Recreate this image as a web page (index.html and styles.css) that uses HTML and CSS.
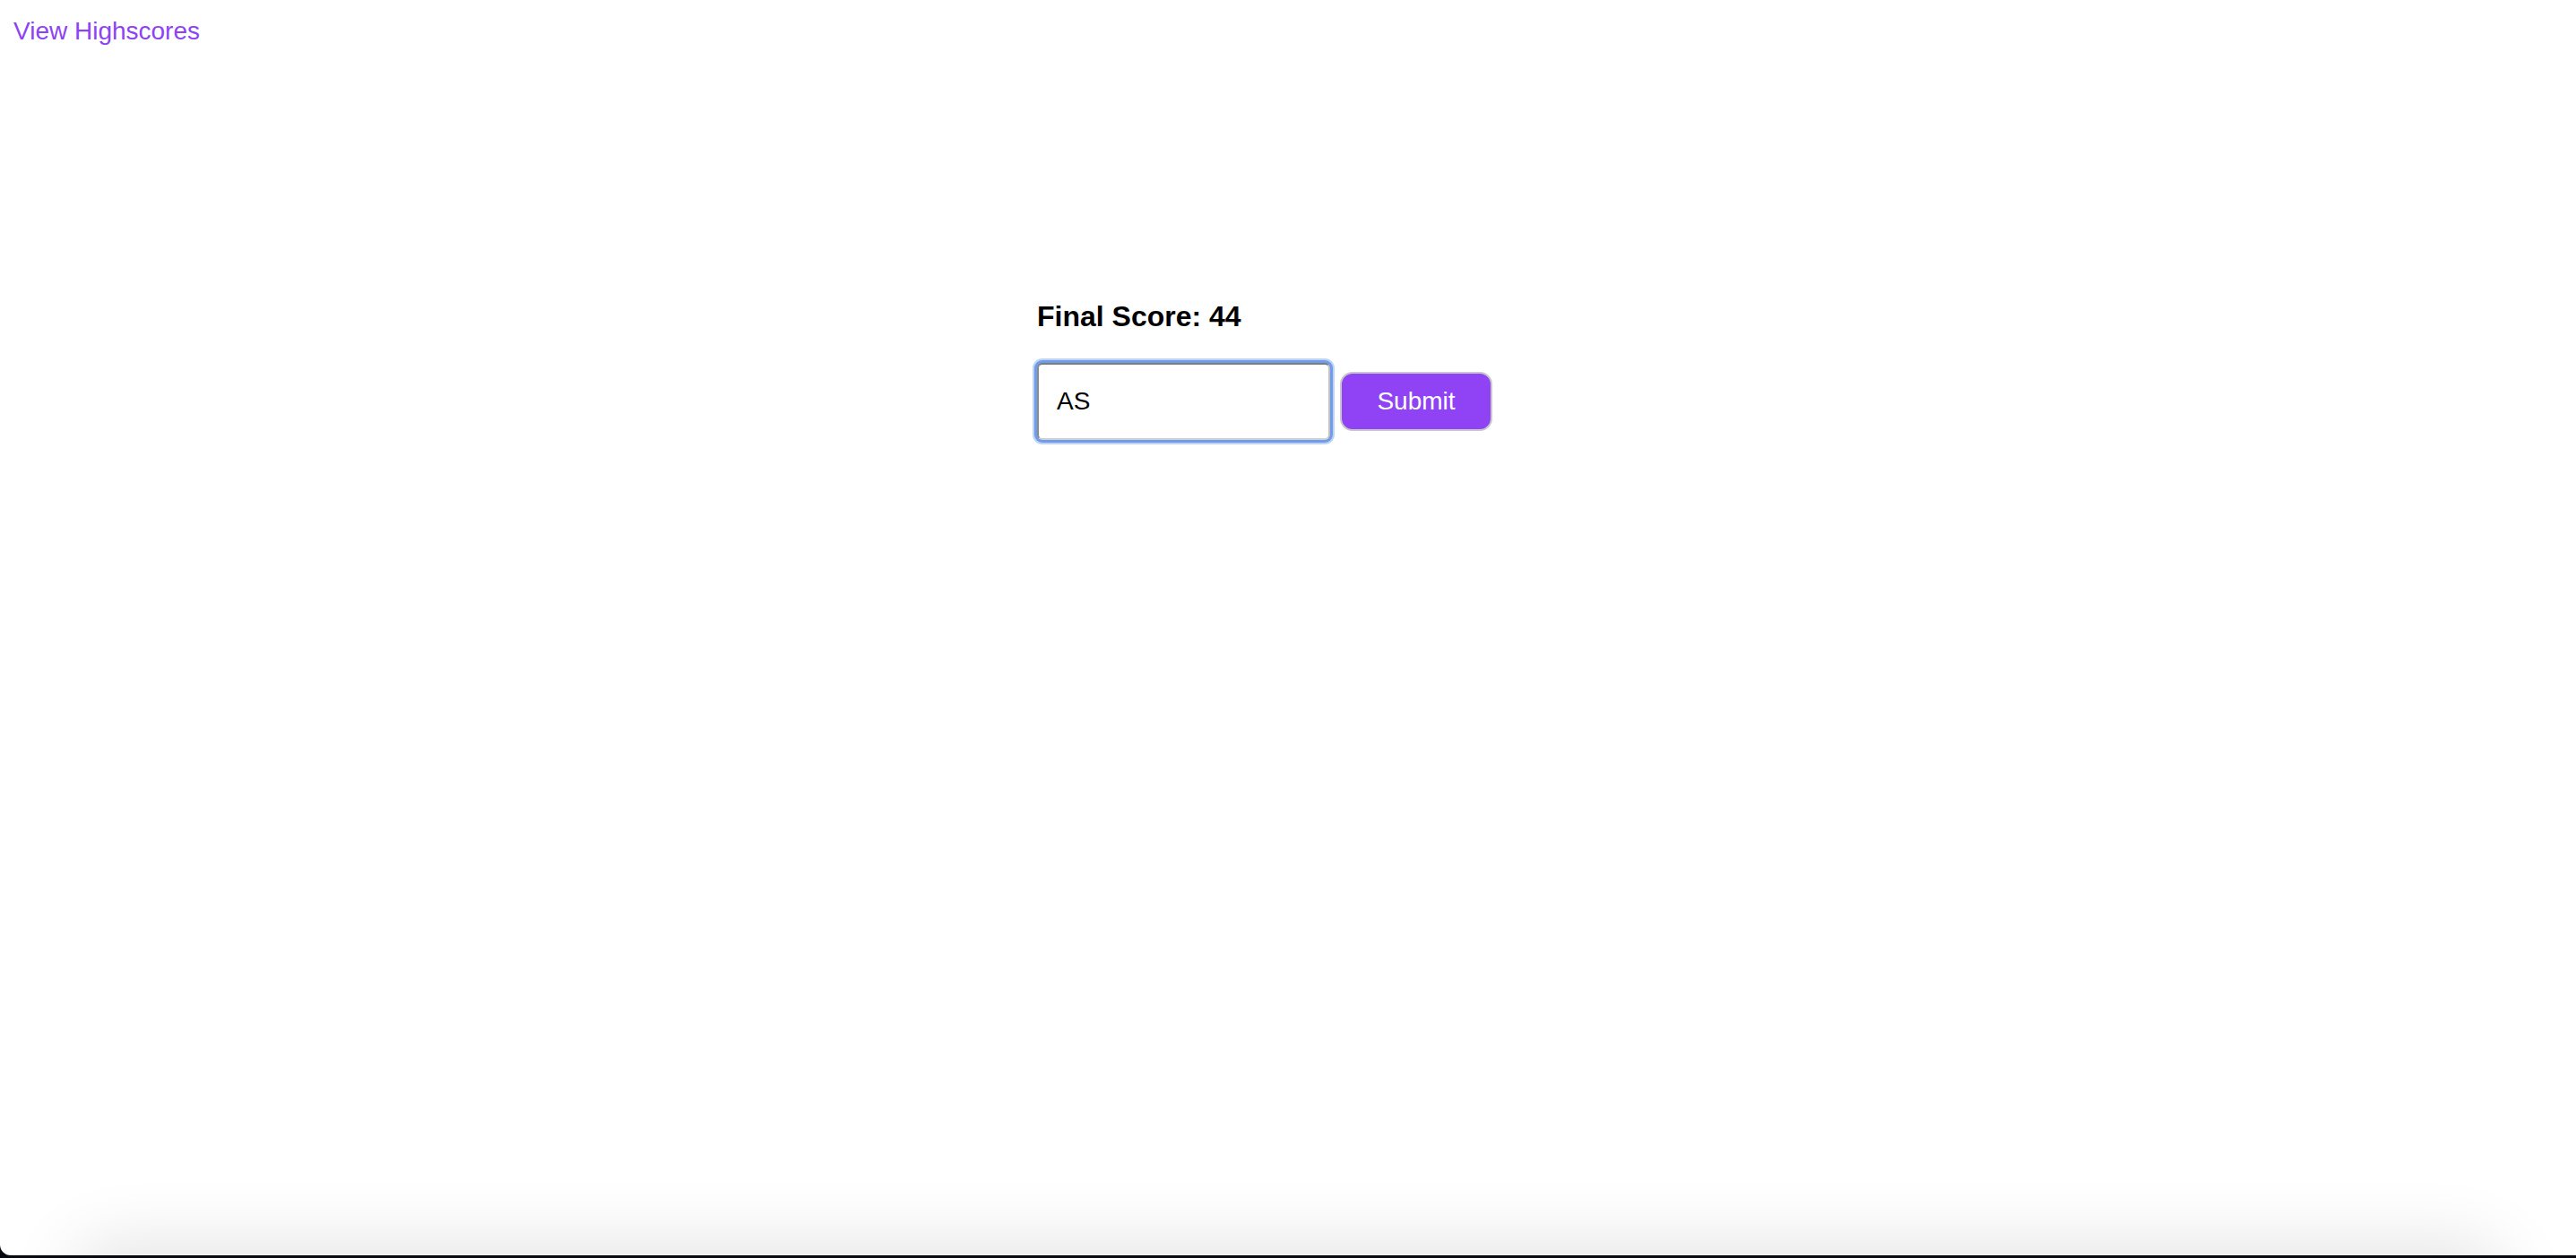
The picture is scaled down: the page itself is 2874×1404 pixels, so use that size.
FILE: index.html
```html
<!DOCTYPE html>
<html lang="en">
<head>
<meta charset="utf-8">
<title>Quiz - Final Score</title>
<link rel="stylesheet" href="styles.css">
</head>
<body class="window">
  <header class="topbar">
    <a class="highscores-link" href="#">View Highscores</a>
  </header>
  <main class="stage">
    <section class="result">
      <h2 class="final-score">Final Score: 44</h2>
      <form class="initials-form">
        <input class="initials-input" type="text" value="AS">
        <button class="submit-btn" type="button">Submit</button>
      </form>
    </section>
  </main>
  <div class="bottom-shadow"></div>
</body>
</html>
```

FILE: styles.css
```css
html {
  height: 100%;
  margin: 0;
  background: #06090f;
}

.window {
  margin: 0;
  height: 1401px;
  position: relative;
  overflow: hidden;
  background: #ffffff;
  border-bottom-left-radius: 12px;
  font-family: "Liberation Sans", Arial, sans-serif;
  color: #000;
}

.topbar {
  padding: 19px 15px 0;
}

.highscores-link {
  font-size: 28px;
  line-height: 32px;
  color: #8d43f4;
  text-decoration: none;
}

.stage {
  padding-top: 284px;
}

.result {
  width: 560px;
  margin: 0 auto;
}

.final-score {
  margin: 0;
  font-size: 32px;
  font-weight: 700;
  line-height: 37px;
}

.initials-form {
  margin-top: 33px;
  display: flex;
  align-items: center;
  gap: 11px;
}

.initials-input {
  box-sizing: border-box;
  width: 327px;
  height: 86px;
  padding: 0 20px;
  font-family: "Liberation Sans", Arial, sans-serif;
  font-size: 28px;
  color: #000;
  background: #fff;
  border: 2px solid #9a9a9a;
  border-top-color: #7d7d7d;
  border-left-color: #8a8a8a;
  border-bottom-color: #d0d0d0;
  border-right-color: #c4c4c4;
  border-radius: 6px;
  outline: none;
  box-shadow: 0 0 0 3px #6f9de9, 0 0 0 5px rgba(111, 157, 233, 0.45);
}

.submit-btn {
  box-sizing: border-box;
  width: 170px;
  height: 66px;
  padding: 0;
  font-family: "Liberation Sans", Arial, sans-serif;
  font-size: 28px;
  color: #fff;
  background: #8f43f5;
  border: 2px solid #c9c9c9;
  border-radius: 14px;
}

.bottom-shadow {
  position: absolute;
  left: 90px;
  right: 90px;
  bottom: -60px;
  height: 60px;
  border-radius: 40px;
  box-shadow: 0 0 80px 10px rgba(0, 0, 0, 0.12);
}
```
